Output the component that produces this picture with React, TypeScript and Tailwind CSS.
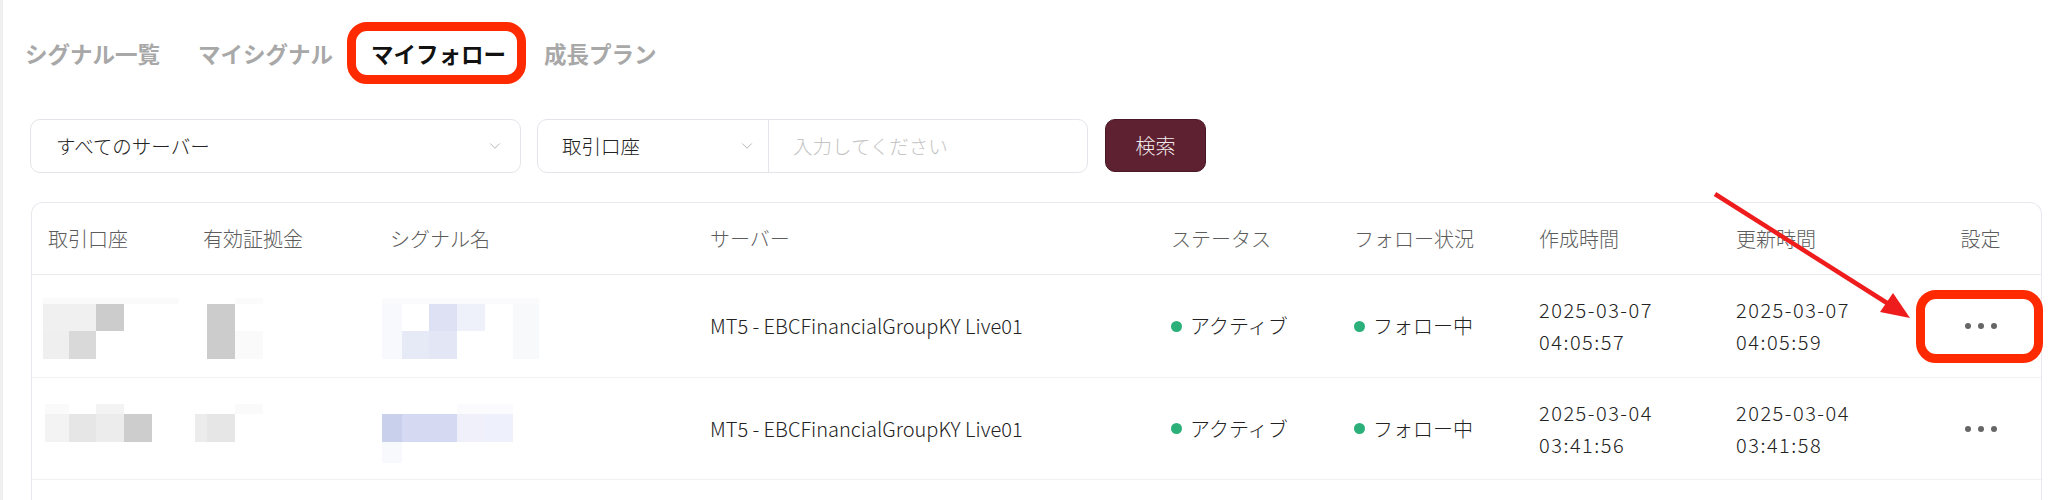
import { ChevronDown } from "lucide-react";

type Block = [number, number, number, number, string];

type FollowRow = {
  top: number;
  height: number;
  account: Block[];
  margin: Block[];
  signal: Block[];
  server: string;
  created: [string, string];
  updated: [string, string];
  highlight?: boolean;
};

const font = { fontFamily: '"Noto Sans CJK JP", "Noto Sans", sans-serif' };

const tabs = ["シグナル一覧", "マイシグナル", "マイフォロー", "成長プラン"];

const headers = [
  "取引口座",
  "有効証拠金",
  "シグナル名",
  "サーバー",
  "ステータス",
  "フォロー状況",
  "作成時間",
  "更新時間",
];

// column start x in page coords, used for the pixelated (blurred) cells
const colX = [47, 202, 389];

const rows: FollowRow[] = [
  {
    top: 275,
    height: 103,
    account: [
      [42, 298, 136, 6, "#fafafa"],
      [42, 304, 53, 27, "#f0f0f0"],
      [95, 304, 28, 27, "#cccccc"],
      [42, 331, 26, 28, "#efefef"],
      [68, 331, 27, 28, "#d9d9d9"],
    ],
    margin: [
      [206, 304, 28, 55, "#cccccc"],
      [234, 331, 28, 28, "#fafafa"],
      [234, 298, 28, 6, "#fbfbfb"],
    ],
    signal: [
      [373, 298, 165, 6, "#fbfbfd"],
      [373, 304, 28, 55, "#f8f9fc"],
      [428, 304, 28, 27, "#dde1f3"],
      [456, 304, 28, 27, "#eef0fa"],
      [401, 331, 27, 28, "#e6e9f6"],
      [428, 331, 28, 28, "#e3e7f5"],
      [512, 304, 26, 55, "#f8f9fb"],
    ],
    server: "MT5 - EBCFinancialGroupKY Live01",
    created: ["2025-03-07", "04:05:57"],
    updated: ["2025-03-07", "04:05:59"],
    highlight: true,
  },
  {
    top: 378,
    height: 102,
    account: [
      [44, 404, 24, 10, "#fafafa"],
      [44, 414, 24, 28, "#f3f3f3"],
      [68, 414, 27, 28, "#e6e6e6"],
      [95, 404, 28, 10, "#f3f3f3"],
      [95, 414, 28, 28, "#ececec"],
      [123, 414, 28, 28, "#cdcdcd"],
    ],
    margin: [
      [179, 414, 27, 28, "#ececec"],
      [206, 414, 28, 28, "#e6e6e6"],
      [234, 404, 28, 10, "#fafafa"],
    ],
    signal: [
      [373, 414, 28, 28, "#c9d0ec"],
      [401, 414, 55, 28, "#d5d9f1"],
      [456, 404, 56, 10, "#fbfbfe"],
      [456, 414, 28, 28, "#eff0fa"],
      [484, 414, 28, 28, "#eef1fb"],
      [373, 442, 28, 21, "#f8f9fc"],
    ],
    server: "MT5 - EBCFinancialGroupKY Live01",
    created: ["2025-03-04", "03:41:56"],
    updated: ["2025-03-04", "03:41:58"],
  },
];

function Pixelated({
  blocks,
  x0,
  top,
  height,
}: {
  blocks: Block[];
  x0: number;
  top: number;
  height: number;
}) {
  // the cell content is mosaic-blurred in the screenshot
  const left = x0 - 8;
  return (
    <svg
      className="-ml-[8px] block self-stretch"
      width={180}
      height={height}
      viewBox={`${left} ${top} 180 ${height}`}
    >
      {blocks.map(([x, y, w, h, c], i) => (
        <rect key={i} x={x} y={y} width={w} height={h} fill={c} />
      ))}
    </svg>
  );
}

function Dot() {
  return <span className="mr-[8px] inline-block h-[11px] w-[11px] rounded-full bg-[#2bb07a]" />;
}

function Tabs() {
  return (
    <div className="flex gap-[38px] pl-[22px] pt-[38px]">
      {tabs.map((tab) => {
        const active = tab === "マイフォロー";
        return (
          <div
            key={tab}
            className={`relative text-[22.5px] font-bold leading-[30px] ${
              active ? "text-[#111]" : "text-[#a8a8a8]"
            }`}
          >
            {tab}
            {active && (
              <span className="absolute -bottom-[16px] -left-[24px] -right-[20px] -top-[16px] rounded-[20px] border-[9px] border-[#ff2a00]" />
            )}
          </div>
        );
      })}
    </div>
  );
}

function Filters() {
  return (
    <div className="mt-[51px] flex h-[54px] pl-[27px] text-[19.5px] font-light">
      <div className="flex w-[491px] items-center justify-between rounded-[10px] border border-[#e4e4ea] pl-[25px] pr-[16px] text-[#222]">
        <span>すべてのサーバー</span>
        <ChevronDown size={18} strokeWidth={1.2} color="#b0b0b0" />
      </div>
      <div className="ml-[16px] flex w-[551px] rounded-[10px] border border-[#e4e4ea]">
        <div className="flex w-[231px] items-center justify-between border-r border-[#e4e4ea] pl-[24px] pr-[12px] text-[#222]">
          <span>取引口座</span>
          <ChevronDown size={18} strokeWidth={1.2} color="#b0b0b0" />
        </div>
        <div className="flex flex-1 items-center pl-[24px] text-[#c4c4c4]">入力してください</div>
      </div>
      <button className="ml-[17px] h-[53px] w-[101px] rounded-[10px] border border-[#4a1824] bg-[#5e2131] text-[20px] text-[#f3ecee]">
        検索
      </button>
    </div>
  );
}

function TableRow({ row }: { row: FollowRow }) {
  return (
    <div
      className="grid grid-cols-[155px_187px_320px_461px_183px_185px_197px_200px_1fr] items-center border-b border-[#f1f1f5] px-[16px] text-[20px] font-light text-[#222]"
      style={{ height: row.height }}
    >
      <Pixelated blocks={row.account} x0={colX[0]} top={row.top} height={row.height - 1} />
      <Pixelated blocks={row.margin} x0={colX[1]} top={row.top} height={row.height - 1} />
      <Pixelated blocks={row.signal} x0={colX[2]} top={row.top} height={row.height - 1} />
      <div className="text-[20px]">{row.server}</div>
      <div className="flex items-center">
        <Dot />
        アクティブ
      </div>
      <div className="flex items-center">
        <Dot />
        フォロー中
      </div>
      <div className="leading-[32px] tracking-[1.5px]">
        <div>{row.created[0]}</div>
        <div>{row.created[1]}</div>
      </div>
      <div className="leading-[32px] tracking-[1.5px]">
        <div>{row.updated[0]}</div>
        <div>{row.updated[1]}</div>
      </div>
      <div className="flex justify-center">
        <div className="relative flex gap-[7px]">
          <span className="h-[6px] w-[6px] rounded-full bg-[#666]" />
          <span className="h-[6px] w-[6px] rounded-full bg-[#666]" />
          <span className="h-[6px] w-[6px] rounded-full bg-[#666]" />
          {row.highlight && (
            <span className="absolute -bottom-[34px] -left-[49px] -right-[46px] -top-[33px] rounded-[20px] border-[9px] border-[#ff2a00]" />
          )}
        </div>
      </div>
    </div>
  );
}

function Table() {
  return (
    <div className="ml-[28px] mr-[24px] mt-[29px] h-[340px] rounded-t-[12px] border border-b-0 border-[#e8e8ee]">
      <div className="grid h-[72px] grid-cols-[155px_187px_320px_461px_183px_185px_197px_200px_1fr] items-center border-b border-[#ebebf0] px-[16px] text-[20px] font-light text-[#5c5c5c]">
        {headers.map((h) => (
          <div key={h}>{h}</div>
        ))}
        <div className="text-center">設定</div>
      </div>
      {rows.map((row) => (
        <TableRow key={row.top} row={row} />
      ))}
    </div>
  );
}

export default function App() {
  return (
    <div
      className="relative h-[500px] w-[2066px] overflow-hidden border-l-[3px] border-[#efefef] bg-white"
      style={font}
    >
      <Tabs />
      <Filters />
      <Table />
      {/* annotation arrow pointing at the settings menu */}
      <svg className="pointer-events-none absolute left-0 top-0" width={2066} height={500}>
        <line x1={1712} y1={194} x2={1884} y2={303} stroke="#ee1c1c" strokeWidth={4.5} />
        <polygon points="1907,318 1877,312 1890,293" fill="#ee1c1c" />
      </svg>
    </div>
  );
}
